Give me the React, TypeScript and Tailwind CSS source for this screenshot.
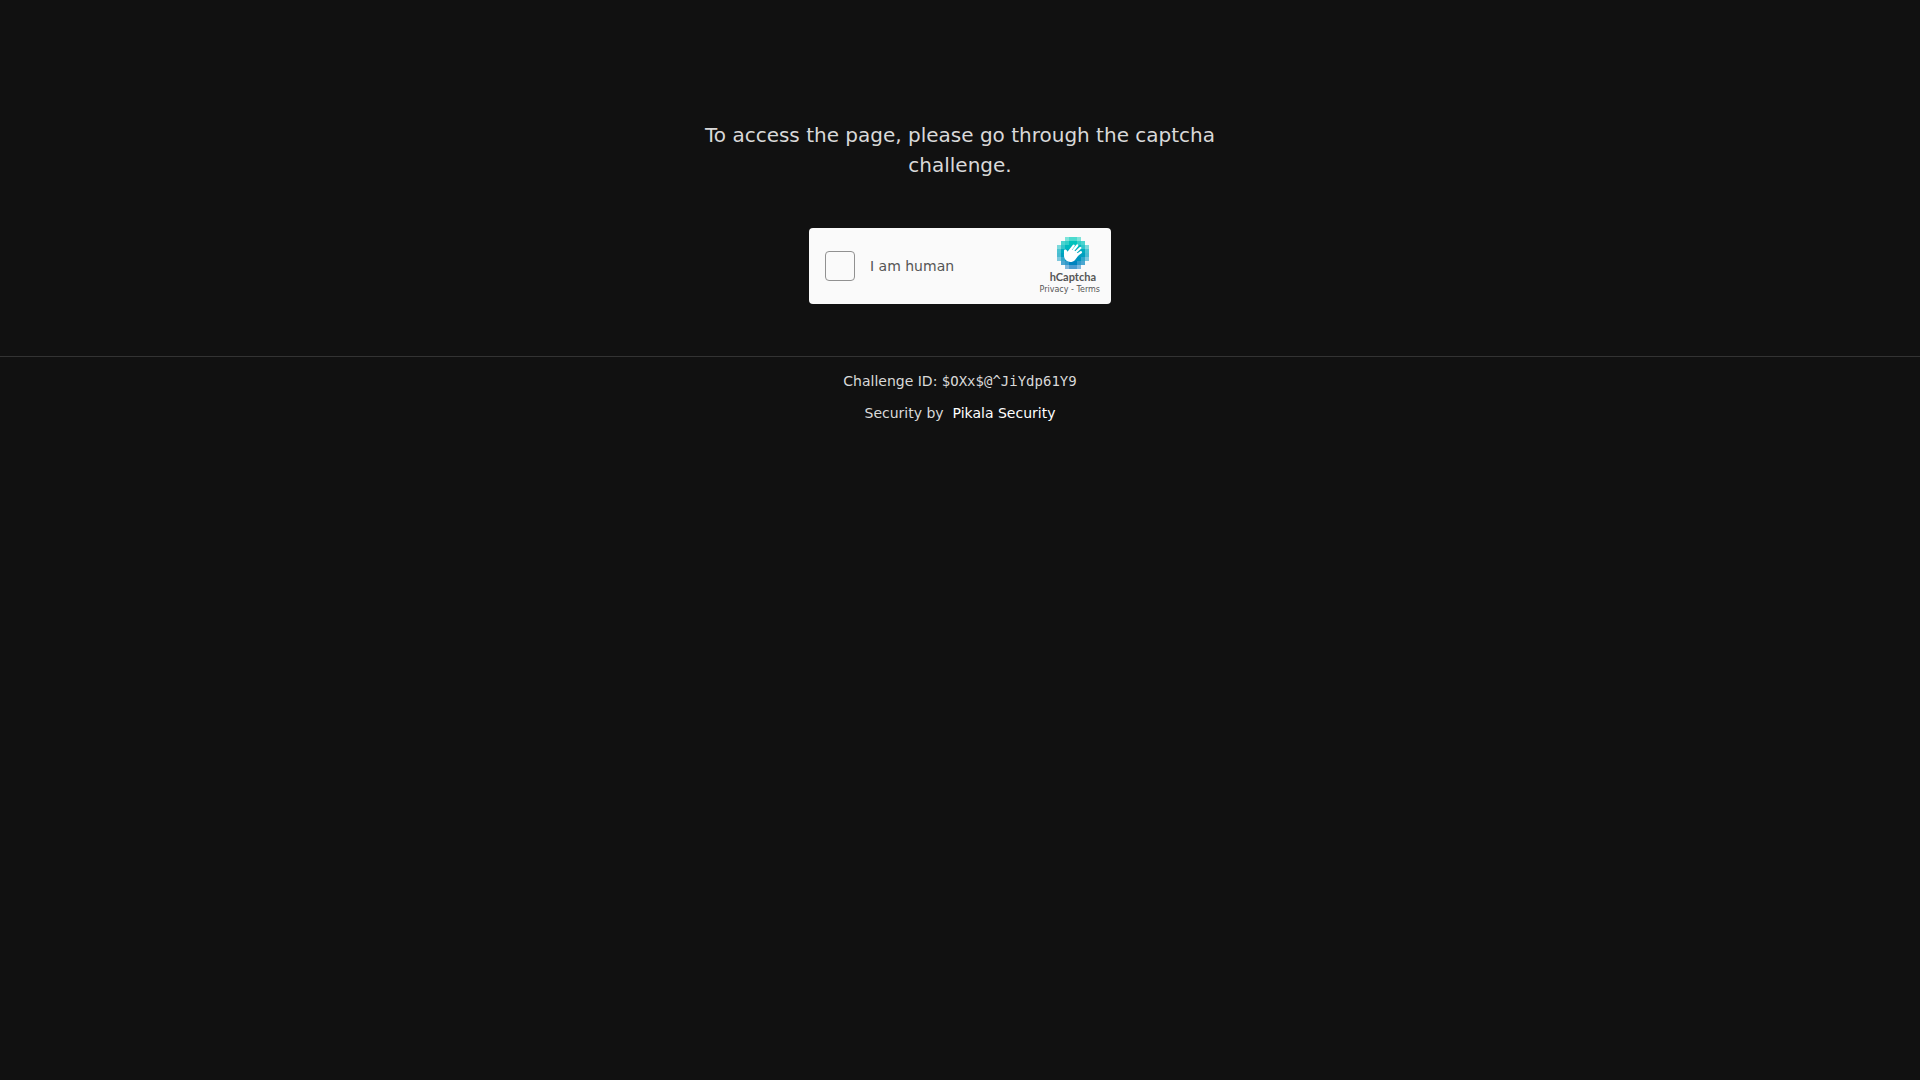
const TILE_OPACITY = [
  [0, 0, 0.5, 0.7, 0.7, 0.5, 0, 0],
  [0, 0.7, 0.8, 1, 1, 0.8, 0.7, 0],
  [0.5, 0.8, 1, 1, 1, 1, 0.8, 0.5],
  [0.7, 1, 1, 1, 1, 1, 1, 0.7],
  [0.7, 1, 1, 1, 1, 1, 1, 0.7],
  [0.5, 0.8, 1, 1, 1, 1, 0.8, 0.5],
  [0, 0.7, 0.8, 1, 1, 0.8, 0.7, 0],
  [0, 0, 0.5, 0.7, 0.7, 0.5, 0, 0],
];
const ROW_COLORS = ["#00ccba", "#00c3bc", "#00b8be", "#00abbf", "#009fbf", "#0093bf", "#0083bf", "#0074bf"];

function CaptchaLogo() {
  return (
    <svg viewBox="0 0 32 32" className="size-8" aria-hidden="true">
      <g shapeRendering="crispEdges">
        {TILE_OPACITY.map((row, y) =>
          row.map((opacity, x) =>
            opacity > 0 ? (
              <rect key={`${x}-${y}`} x={x * 4} y={y * 4} width="4" height="4" fill={ROW_COLORS[y]} opacity={opacity} />
            ) : null,
          ),
        )}
      </g>
      <path
        fill="#fff"
        d="M7 14 L9.6 13.2 L10.8 14.8 L13.4 12.4 L17 13.4 L20.2 15.8 L22 17.4 C20.4 19.6 19.4 21.4 18 22.9 C15.8 25.3 12.2 25.6 9.6 23.8 C7.2 22 6.8 19.6 7 16.6 Z"
      />
      <g fill="none" stroke="#fff" strokeLinecap="round" strokeWidth="2.3">
        <path d="M8.3 13.8 L9.3 17" strokeWidth="2.6" />
        <path d="M12 14.8 L16.7 8.6" />
        <path d="M14.5 15.6 L20.2 8.5" />
        <path d="M16.8 17 L23.3 11" />
        <path d="M18.4 19.2 L23.9 15.2" />
      </g>
    </svg>
  );
}

function CaptchaWidget() {
  return (
    <section
      aria-label="hCaptcha"
      className="flex h-19 w-[302px] items-center rounded-sm bg-[#fafafa] pr-[11px] pl-4 text-[#555]"
    >
      <input
        id="human"
        type="checkbox"
        className="size-[30px] shrink-0 appearance-none rounded-sm border border-[#919191] bg-[#fafafa] checked:bg-[#00a6bf]"
      />
      <label htmlFor="human" className="flex-1 pl-[15px] text-sm">
        I am human
      </label>
      <div className="flex flex-col items-end">
        <div className="mr-1 flex flex-col items-center">
          <CaptchaLogo />
          <span className="font-['Lato'] text-[11px] leading-4 font-bold">hCaptcha</span>
        </div>
        <div className="text-[8px] leading-[10px]">
          <a href="#privacy">Privacy</a> - <a href="#terms">Terms</a>
        </div>
      </div>
    </section>
  );
}

export default function App() {
  return (
    <div className="min-h-screen bg-[#111] font-['DejaVu_Sans',sans-serif] text-[#d9d9d9]">
      <main className="flex flex-col items-center px-4 pt-30 pb-13">
        <p className="max-w-[560px] text-center text-xl leading-[30px]">
          To access the page, please go through the captcha challenge.
        </p>
        <div className="pt-12">
          <CaptchaWidget />
        </div>
      </main>
      <footer className="flex flex-col items-center gap-3 border-t border-[#333] pt-3.5 text-sm">
        <p>
          Challenge ID: <code className="font-['DejaVu_Sans_Mono',monospace]">$OXx$@^JiYdp61Y9</code>
        </p>
        <p>
          Security by&nbsp; <a href="#pikala" className="text-white">Pikala Security</a>
        </p>
      </footer>
    </div>
  );
}
